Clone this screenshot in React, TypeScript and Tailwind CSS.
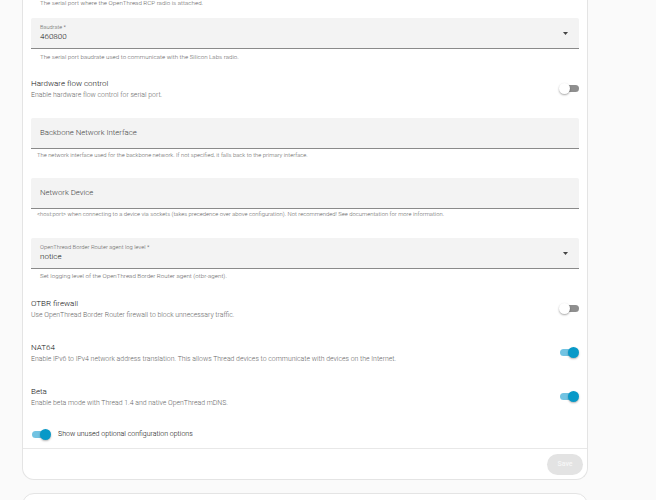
import React from "react";

function Toggle({ on }: { on: boolean }) {
  return (
    <div className="relative w-[20px] h-[11px] shrink-0">
      <div
        className={
          on
            ? "absolute left-[1px] right-[3px] top-[2px] h-[7px] rounded-full bg-[#72c3e2]"
            : "absolute left-[3px] right-0 top-[2px] h-[7px] rounded-full bg-[#8f8f8f]"
        }
      />
      <div
        className={
          on
            ? "absolute right-0 top-0 w-[11px] h-[11px] rounded-full bg-[#0899c8] shadow-[0_1px_2px_rgba(0,0,0,0.3)]"
            : "absolute left-0 top-0 w-[11px] h-[11px] rounded-full bg-white shadow-[0_1px_2px_rgba(0,0,0,0.35)]"
        }
      />
    </div>
  );
}

function SwitchRow({ title, desc, on, mt }: { title: string; desc: string; on: boolean; mt: string }) {
  return (
    <div className={`flex items-center justify-between ${mt}`}>
      <div className="flex flex-col">
        <div className="text-[8px] leading-[11px] font-light text-[#111]">{title}</div>
        <div className="mt-[2px] text-[6.9px] leading-[9px] font-light text-[#666]">{desc}</div>
      </div>
      <Toggle on={on} />
    </div>
  );
}

function Arrow() {
  return (
    <svg width="5" height="3" viewBox="0 0 5 3" className="shrink-0">
      <path d="M0 0 L5 0 L2.5 3 Z" fill="#444" />
    </svg>
  );
}

export default function App() {
  return (
    <div className="w-[656px] h-[500px] overflow-hidden bg-[#fafafa] font-light" style={{ fontFamily: "Roboto, 'Liberation Sans', sans-serif" }}>
      <div className="ml-[22px] w-[566px] bg-white border-x border-b border-[#e4e4e4] rounded-b-[12px]">
        <div className="px-[8px] pb-[8px]">
          <div className="-mt-px h-[8px] pl-[9px] text-[6.2px] leading-[8px] text-[#666]">
            The serial port where the OpenThread RCP radio is attached.
          </div>

          <div className="mt-[11px] h-[31px] bg-[#f3f3f3] rounded-t-[2px] border-b border-[#8a8a8a] flex items-center justify-between pl-[9px] pr-[11px]">
            <div className="flex flex-col self-start pt-[6px]">
              <div className="text-[5.6px] leading-[6px] text-[#666]">Baudrate *</div>
              <div className="mt-[1px] text-[8px] leading-[12px] text-[#111]">460800</div>
            </div>
            <Arrow />
          </div>
          <div className="mt-[4px] h-[8px] pl-[9px] text-[6.2px] leading-[8px] text-[#666]">
            The serial port baudrate used to communicate with the Silicon Labs radio.
          </div>

          <SwitchRow
            mt="mt-[16.5px]"
            title="Hardware flow control"
            desc="Enable hardware flow control for serial port."
            on={false}
          />

          <div className="mt-[18.5px] h-[31px] bg-[#f3f3f3] rounded-t-[2px] border-b border-[#8a8a8a] flex items-center pl-[9px]">
            <div className="text-[7.8px] leading-[12px] text-[#444]">Backbone Network Interface</div>
          </div>
          <div className="mt-[2px] h-[8px] pl-[6px] text-[5.85px] leading-[8px] text-[#666]">
            The network interface used for the backbone network. If not specified, it falls back to the primary interface.
          </div>

          <div className="mt-[19px] h-[31px] bg-[#f3f3f3] rounded-t-[2px] border-b border-[#8a8a8a] flex items-center pl-[9px]">
            <div className="text-[7.8px] leading-[12px] text-[#444]">Network Device</div>
          </div>
          <div className="mt-[1px] h-[8px] pl-[6px] text-[5.85px] leading-[8px] text-[#666]">
            &lt;host:port&gt; when connecting to a device via sockets (takes precedence over above configuration). Not recommended! See documentation for more information.
          </div>

          <div className="mt-[20px] h-[31px] bg-[#f3f3f3] rounded-t-[2px] border-b border-[#8a8a8a] flex items-center justify-between pl-[9px] pr-[11px]">
            <div className="flex flex-col self-start pt-[6px]">
              <div className="text-[5.8px] leading-[6px] text-[#666]">OpenThread Border Router agent log level *</div>
              <div className="mt-[1px] text-[8px] leading-[12px] text-[#111]">notice</div>
            </div>
            <Arrow />
          </div>
          <div className="mt-[3px] h-[8px] pl-[9px] text-[6.2px] leading-[8px] text-[#666]">
            Set logging level of the OpenThread Border Router agent (otbr-agent).
          </div>

          <SwitchRow
            mt="mt-[17.5px]"
            title="OTBR firewall"
            desc="Use OpenThread Border Router firewall to block unnecessary traffic."
            on={false}
          />
          <SwitchRow
            mt="mt-[22px]"
            title="NAT64"
            desc="Enable IPv6 to IPv4 network address translation. This allows Thread devices to communicate with devices on the Internet."
            on={true}
          />
          <SwitchRow
            mt="mt-[22px]"
            title="Beta"
            desc="Enable beta mode with Thread 1.4 and native OpenThread mDNS."
            on={true}
          />

          <div className="mt-[20.5px] h-[12px] flex items-center gap-[7px]">
            <Toggle on={true} />
            <div className="text-[7px] leading-[12px] text-[#111]">Show unused optional configuration options</div>
          </div>
        </div>
        <div className="border-t border-[#e8e8e8] flex justify-end pt-[5px] pb-[4px] pr-[4px]">
          <button className="w-[36px] h-[21px] rounded-full bg-[#e3e3e3] text-[7px] font-medium text-[#f7f7f7]">
            Save
          </button>
        </div>
      </div>
      <div className="mt-[13px] ml-[22px] w-[566px] h-[40px] bg-white border border-[#e4e4e4] rounded-t-[12px]" />
    </div>
  );
}
